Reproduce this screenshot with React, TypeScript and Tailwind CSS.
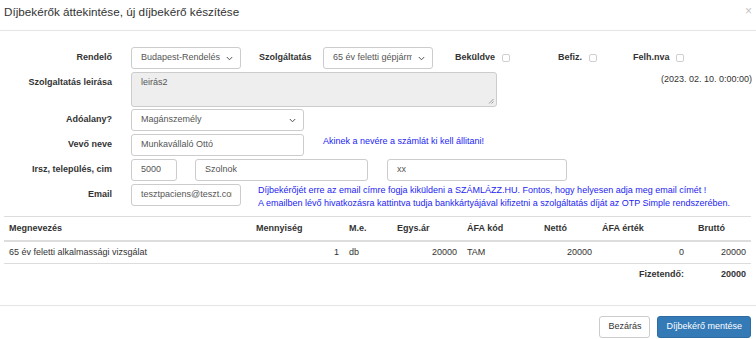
import React from "react";

const Chevron = () => (
  <svg width="7" height="5" viewBox="0 0 7 5" className="shrink-0">
    <path d="M0.8 1 L3.5 3.8 L6.2 1" fill="none" stroke="#555" strokeWidth="1" />
  </svg>
);

const Select = ({ value, w }: { value: string; w: string }) => (
  <div
    className={`${w} h-[22px] flex items-center justify-between pl-[9px] pr-[7px] border border-[#ccc] rounded-[3px] bg-white text-[#555] overflow-hidden whitespace-nowrap`}
  >
    <span className="overflow-hidden">{value}</span>
    <span className="ml-[6px]">
      <Chevron />
    </span>
  </div>
);

const Input = ({ value, w }: { value: string; w: string }) => (
  <div
    className={`${w} h-[22px] flex items-center pl-[9px] pr-[8px] border border-[#ccc] rounded-[3px] bg-white text-[#555] whitespace-nowrap`}
  >
    <span className="block overflow-hidden">{value}</span>
  </div>
);

const Check = () => (
  <div className="w-[8px] h-[8px] border border-[#cfcfcf] rounded-[2px] bg-white" />
);

const Label = ({ children }: { children: React.ReactNode }) => (
  <div className="w-[108px] text-right font-bold text-[#333] shrink-0">{children}</div>
);

const cols = [
  { name: "Megnevezés", w: "w-[247px]" },
  { name: "Mennyiség", w: "w-[93px]" },
  { name: "M.e.", w: "w-[48px]" },
  { name: "Egys.ár", w: "w-[70px]" },
  { name: "ÁFA kód", w: "w-[77px]" },
  { name: "Nettó", w: "w-[58px]" },
  { name: "ÁFA érték", w: "w-[92px]" },
  { name: "Bruttó", w: "w-[62px]" },
];

export default function App() {
  return (
    <div
      className="w-[756px] h-[339px] bg-white text-[9px] text-[#333] overflow-hidden flex flex-col"
      style={{ fontFamily: '"Liberation Sans", Arial, sans-serif' }}
    >
      {/* header */}
      <div className="h-[31px] flex items-center justify-between pl-[4px] pr-[4px] border-b border-[#e5e5e5]">
        <div className="text-[11.7px] text-[#333] -mt-[7px]">Díjbekérők áttekintése, új díjbekérő készítése</div>
        <div className="text-[12px] text-[#c4c4c4] -mt-[9px]">×</div>
      </div>

      {/* body */}
      <div className="flex-1 px-[4px] pt-[16px] border-b border-[#e5e5e5]">
        {/* row 1 */}
        <div className="flex items-center h-[22px]">
          <Label>Rendelő</Label>
          <div className="ml-[19px]">
            <Select value="Budapest-Rendelés" w="w-[110px]" />
          </div>
          <div className="ml-[18px] w-[64px] font-bold">Szolgáltatás</div>
          <Select value="65 év feletti gépjárm" w="w-[110px]" />
          <div className="ml-[22px] w-[103px] flex items-center gap-[7px]">
            <span className="font-bold">Beküldve</span>
            <Check />
          </div>
          <div className="w-[75px] flex items-center gap-[7px]">
            <span className="font-bold">Befiz.</span>
            <Check />
          </div>
          <div className="flex items-center gap-[6px]">
            <span className="font-bold">Felh.nva</span>
            <Check />
          </div>
        </div>

        {/* row 2 */}
        <div className="flex items-start mt-[3px]">
          <div className="pt-[4px]">
            <Label>Szolgaltatás leirása</Label>
          </div>
          <div className="ml-[19px] w-[366px] h-[35px] border border-[#ccc] rounded-[3px] bg-[#eee] text-[#555] pl-[9px] pt-[3px] relative">
            leirás2
            <svg width="6" height="6" viewBox="0 0 6 6" className="absolute right-[2px] bottom-[2px]">
              <path d="M5.5 1 L1 5.5 M5.5 3.5 L3.5 5.5" stroke="#888" strokeWidth="0.8" />
            </svg>
          </div>
          <div className="ml-auto pt-[1px] text-[#333]">(2023. 02. 10. 0:00:00)</div>
        </div>

        {/* row 3 */}
        <div className="flex items-center mt-[2px]">
          <Label>Adóalany?</Label>
          <div className="ml-[19px]">
            <Select value="Magánszemély" w="w-[173px]" />
          </div>
        </div>

        {/* row 4 */}
        <div className="flex items-start mt-[3px]">
          <div className="h-[22px] flex items-center">
            <Label>Vevő neve</Label>
          </div>
          <div className="ml-[19px]">
            <Input value="Munkavállaló Ottó" w="w-[173px]" />
          </div>
          <div className="ml-[19px] pt-[1px] text-[#2424f2]">Akinek a nevére a számlát ki kell állitani!</div>
        </div>

        {/* row 5 */}
        <div className="flex items-center mt-[3px]">
          <Label>Irsz, település, cim</Label>
          <div className="ml-[19px]">
            <Input value="5000" w="w-[46px]" />
          </div>
          <div className="ml-[18px]">
            <Input value="Szolnok" w="w-[173px]" />
          </div>
          <div className="ml-[19px]">
            <Input value="xx" w="w-[180px]" />
          </div>
        </div>

        {/* row 6 */}
        <div className="flex items-start mt-[3px]">
          <div className="h-[22px] flex items-center">
            <Label>Email</Label>
          </div>
          <div className="ml-[19px]">
            <Input value="tesztpaciens@teszt.com" w="w-[110px]" />
          </div>
          <div className="ml-[17px] text-[#2424f2] leading-[13px]">
            <div>Díjbekérőjét erre az email címre fogja kiküldeni a SZÁMLÁZZ.HU. Fontos, hogy helyesen adja meg email címét !</div>
            <div>A emailben lévő hivatkozásra kattintva tudja bankkártyájával kifizetni a szolgáltatás díját az OTP Simple rendszerében.</div>
          </div>
        </div>

        {/* table */}
        <table className="mt-[6px] table-fixed border-collapse w-[747px]">
          <thead>
            <tr className="h-[24px] border-t border-[#ddd] border-b-2 border-b-[#ddd]">
              {cols.map((c, i) => (
                <th
                  key={c.name}
                  className={`${c.w} text-left font-bold px-[5px] ${i === 7 ? "pl-[9px]" : ""}`}
                >
                  {c.name}
                </th>
              ))}
            </tr>
          </thead>
          <tbody>
            <tr className="h-[23px] border-b border-[#ddd]">
              <td className="px-[5px]">65 év feletti alkalmassági vizsgálat</td>
              <td className="px-[5px] text-right">1</td>
              <td className="px-[5px]">db</td>
              <td className="px-[5px] text-right">20000</td>
              <td className="px-[5px]">TAM</td>
              <td className="px-[5px] text-right">20000</td>
              <td className="px-[5px] text-right">0</td>
              <td className="px-[5px] text-right">20000</td>
            </tr>
            <tr className="h-[22px]">
              <td colSpan={6}></td>
              <td className="px-[5px] text-right font-bold">Fizetendő:</td>
              <td className="px-[5px] text-right font-bold">20000</td>
            </tr>
          </tbody>
        </table>
      </div>

      {/* footer */}
      <div className="h-[33px] flex items-center justify-end gap-[7px] pr-[5px] pt-[10px] pb-[1px]">
        <div className="h-[22px] px-[8px] flex items-center border border-[#ccc] rounded-[3px] bg-white text-[#333]">
          Bezárás
        </div>
        <div className="h-[22px] px-[8px] flex items-center border border-[#2e6da4] rounded-[3px] bg-[#337ab7] text-white">
          Díjbekérő mentése
        </div>
      </div>
    </div>
  );
}
